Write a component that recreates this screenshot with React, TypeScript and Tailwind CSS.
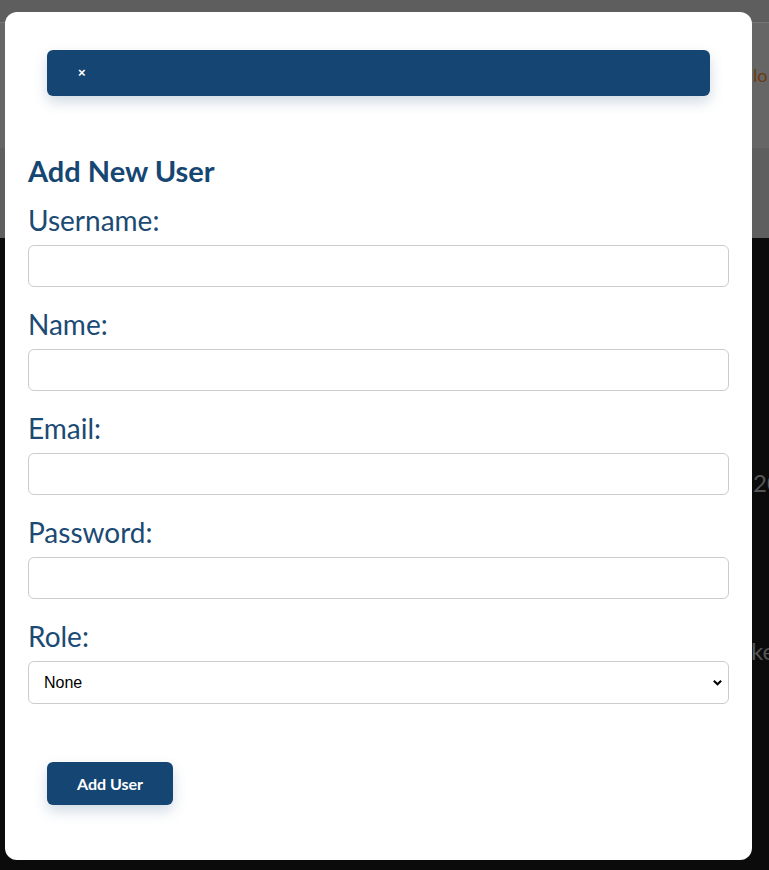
import { useState } from 'react'

const fields = [
  { key: 'username', label: 'Username:', type: 'text' },
  { key: 'name', label: 'Name:', type: 'text' },
  { key: 'email', label: 'Email:', type: 'email' },
  { key: 'password', label: 'Password:', type: 'password' },
]

export default function App() {
  const [role, setRole] = useState('none')

  return (
    <div className="relative w-[769px] h-[870px] overflow-hidden bg-[#0b0b0b] font-['Lato',sans-serif]">
      {/* dimmed page behind the modal */}
      <div className="h-[238px] bg-[#666666] flex flex-col">
        <div className="h-[22px] bg-[#5e5e5e]" />
        <div className="h-[126px] border-t border-[#777]" />
        <div className="flex-1 bg-[#5f5f5f]" />
      </div>
      <div className="absolute left-[753px] top-[62px] text-[18px] leading-[26px] text-[#6b3a12] whitespace-nowrap">lo</div>
      <div className="absolute left-[753px] top-[468px] text-[24px] leading-[30px] text-[#555] whitespace-nowrap">20</div>
      <div className="absolute left-[751px] top-[636px] text-[24px] leading-[30px] text-[#555] whitespace-nowrap">ke</div>

      {/* modal */}
      <div className="absolute left-[5px] top-[12px] w-[747px] h-[848px] bg-white rounded-[12px] px-[23px] pt-[38px]">
        <div className="mx-[19px] h-[46px] bg-[#154673] rounded-[6px] shadow-[0_6px_14px_rgba(21,70,115,0.2)] flex items-center pl-[31px]">
          <span className="text-white text-[13px] font-bold font-['Liberation_Sans',sans-serif]">×</span>
        </div>

        <h2 className="mt-[58px] text-[29px] leading-[34px] font-bold text-[#164773]">Add New User</h2>

        <form className="flex flex-col">
          {fields.map((f, i) => (
            <div key={f.key} className={i === 0 ? 'mt-[15px]' : 'mt-[20px]'}>
              <label className="block text-[28px] leading-[34px] text-[#1b4a74] mb-[8px]">{f.label}</label>
              <input
                type={f.type}
                className="block w-full h-[42px] border border-[#cccccc] rounded-[6px] px-3 text-[16px] outline-none"
              />
            </div>
          ))}
          <div className="mt-[20px]">
            <label className="block text-[28px] leading-[34px] text-[#1b4a74] mb-[8px]">Role:</label>
            <div className="relative">
              <select
                value={role}
                onChange={(e) => setRole(e.target.value)}
                className="block w-full h-[43px] appearance-none border border-[#cccccc] rounded-[6px] pl-[15px] text-[16px] text-black bg-white font-['Liberation_Sans',sans-serif] outline-none"
              >
                <option value="none">None</option>
                <option value="admin">Admin</option>
                <option value="user">User</option>
              </select>
              <svg className="absolute right-[6px] top-[16px] w-[11px] h-[11px] pointer-events-none" viewBox="0 0 12 12">
                <path d="M2 4l4 4 4-4" fill="none" stroke="#000" strokeWidth="2.2" />
              </svg>
            </div>
          </div>

          <div className="mt-[58px] ml-[19px]">
            <button
              type="button"
              className="w-[126px] h-[43px] rounded-[6px] bg-[#154673] text-white text-[16px] font-bold shadow-[0_6px_14px_rgba(21,70,115,0.2)]"
            >
              Add User
            </button>
          </div>
        </form>
      </div>
    </div>
  )
}
